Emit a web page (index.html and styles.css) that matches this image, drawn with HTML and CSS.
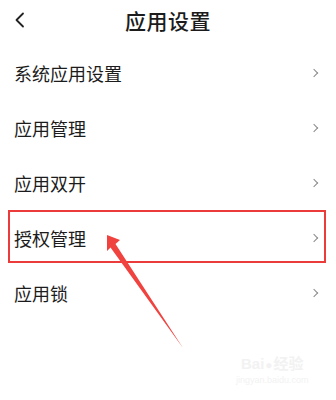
FILE: index.html
```html
<!DOCTYPE html>
<html lang="zh">
<head>
    <meta charset="UTF-8">
    <meta name="viewport" content="width=device-width, initial-scale=1.0">
    <title>应用设置</title>
    <link rel="stylesheet" href="styles.css">
</head>
<body>
    <div class="page">
        <header class="top-bar">
            <svg class="back" width="12" height="16" viewBox="0 0 12 16">
                <path d="M9 1.5 L2.5 8 L9 14.5" fill="none" stroke="#222" stroke-width="1.8" stroke-linecap="round" stroke-linejoin="round"/>
            </svg>
            <h1 class="title">应用设置</h1>
        </header>
        <ul class="menu">
            <li class="menu-item"><span>系统应用设置</span><i class="chevron"></i></li>
            <li class="menu-item"><span>应用管理</span><i class="chevron"></i></li>
            <li class="menu-item"><span>应用双开</span><i class="chevron"></i></li>
            <li class="menu-item"><span>授权管理</span><i class="chevron"></i></li>
            <li class="menu-item"><span>应用锁</span><i class="chevron"></i></li>
        </ul>

        <!-- annotation -->
        <div class="highlight"></div>
        <svg class="arrow" width="336" height="400" viewBox="0 0 336 400">
            <polygon points="107,235 120,240 115.5,244 183,348 110.5,247.5 107,251" fill="#f0433f"/>
        </svg>

        <div class="watermark">
            <div class="wm-logo">Bai<span class="paw">&#9679;</span>经验</div>
            <div class="wm-url">jingyan.baidu.com</div>
        </div>
    </div>
</body>
</html>
```

FILE: styles.css
```css
* {
    box-sizing: border-box;
}
body {
    margin: 0;
    background: #fff;
    font-family: "Noto Sans CJK SC", "Noto Sans", sans-serif;
    color: #1c1c1c;
}
.page {
    position: relative;
    width: 336px;
    height: 400px;
    overflow: hidden;
}
.top-bar {
    position: relative;
    height: 45px;
    display: flex;
    align-items: flex-start;
    justify-content: center;
    padding-top: 5px;
}
.back {
    position: absolute;
    left: 14px;
    top: 12px;
}
.title {
    margin: 0;
    font-size: 21px;
    font-weight: 500;
    line-height: 30px;
    letter-spacing: 0.5px;
}
.menu {
    list-style: none;
    margin: 0;
    padding: 0;
}
.menu-item {
    height: 55px;
    display: flex;
    align-items: center;
    justify-content: space-between;
    padding: 0 19px 0 14px;
    font-size: 18px;
}
.chevron {
    width: 6px;
    height: 6px;
    border-top: 1.5px solid #8a8a8a;
    border-right: 1.5px solid #8a8a8a;
    transform: rotate(45deg);
}
.highlight {
    position: absolute;
    left: 8px;
    top: 210px;
    width: 318px;
    height: 53px;
    border: 2px solid #eb3b3b;
}
.arrow {
    position: absolute;
    left: 0;
    top: 0;
}
.watermark {
    position: absolute;
    left: 236px;
    top: 355px;
    color: #f2f2f2;
    text-align: center;
}
.wm-logo {
    font-family: "Liberation Sans", "Noto Sans CJK SC", sans-serif;
    font-size: 15px;
    font-weight: bold;
    line-height: 18px;
}
.paw {
    font-size: 12px;
    margin: 0 1px;
}
.wm-url {
    font-family: "Liberation Sans", sans-serif;
    font-size: 9px;
    line-height: 12px;
}
```
